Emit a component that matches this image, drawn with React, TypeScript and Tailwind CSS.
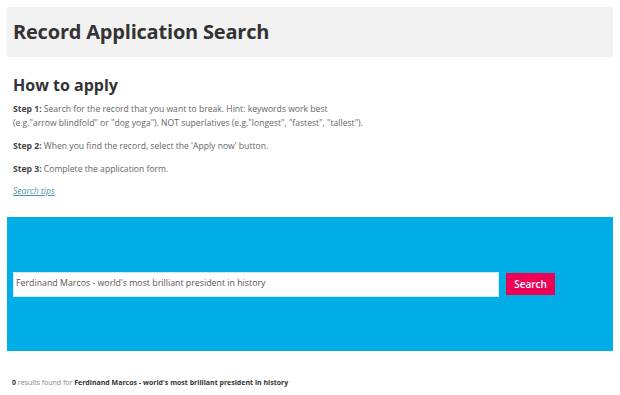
export default function App() {
  const font = { fontFamily: '"Open Sans", "Liberation Sans", sans-serif' };
  return (
    <div className="w-[620px] h-[395px] bg-white overflow-hidden" style={font}>
      <div className="pt-[7px] pl-[7px] pr-[7px] w-[620px]">
        <div className="h-[50px] bg-[#f2f2f2] flex items-center px-[6px]">
          <h1 className="text-[20px] font-bold text-[#333] tracking-[-0.2px]">Record Application Search</h1>
        </div>
        <div className="px-[6px] pt-[16px] h-[160px]">
          <h2 className="text-[16px] font-bold text-[#333] leading-[24px]">How to apply</h2>
          <p className="mt-[5px] text-[8.6px] leading-[14px] text-[#666]">
            <span className="font-bold text-[#444]">Step 1:</span> Search for the record that you want to break. Hint: keywords work best
            <br />
            (e.g."arrow blindfold" or "dog yoga"). NOT superlatives (e.g."longest", "fastest", "tallest").
          </p>
          <p className="mt-[9px] text-[8.6px] leading-[14px] text-[#666]">
            <span className="font-bold text-[#444]">Step 2:</span> When you find the record, select the 'Apply now' button.
          </p>
          <p className="mt-[9px] text-[8.6px] leading-[14px] text-[#666]">
            <span className="font-bold text-[#444]">Step 3:</span> Complete the application form.
          </p>
          <p className="mt-[8px] text-[8.6px] leading-[14px] italic text-[#4a9aa8] underline">Search tips</p>
        </div>
        <div className="h-[134px] bg-[#00ade6] flex items-center gap-[7px] px-[6px]">
          <div className="w-[486px] h-[25px] bg-white border border-[#cfe9f3] flex items-center px-[2px] text-[8.8px] text-[#555]">
            Ferdinand Marcos - world's most brilliant president in history
          </div>
          <div className="w-[49px] h-[22px] bg-[#ee0055] text-white text-[10px] font-semibold flex items-center justify-center">
            Search
          </div>
        </div>
        <div className="px-[5px] pt-[25px] text-[7px] leading-[14px] text-[#888]">
          <span className="font-bold text-[#333]">0</span> results found for{" "}
          <span className="font-bold text-[#333]">Ferdinand Marcos - world's most brilliant president in history</span>
        </div>
      </div>
    </div>
  );
}
